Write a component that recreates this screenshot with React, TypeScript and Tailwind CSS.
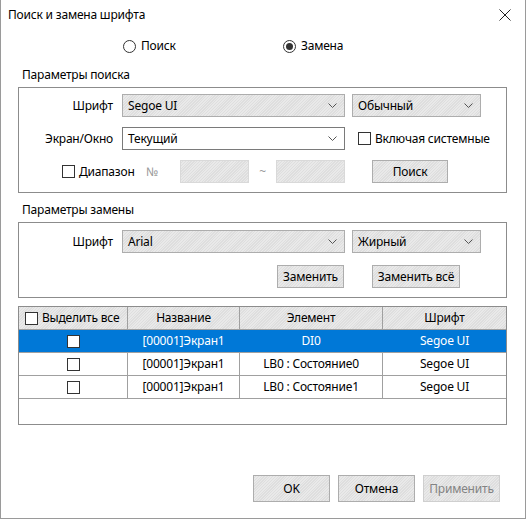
import React from 'react';

const hatch =
  'bg-[repeating-linear-gradient(135deg,#e9e9e9_0px,#e9e9e9_1px,#dedede_1px,#dedede_2px)]';

function Chevron() {
  return (
    <svg width="9" height="6" viewBox="0 0 9 6" className="shrink-0">
      <path d="M0.5 0.5 L4.5 4.5 L8.5 0.5" fill="none" stroke="#555" strokeWidth="1" />
    </svg>
  );
}

function Select({ value, width, white = false }: { value: string; width: string; white?: boolean }) {
  return (
    <div
      className={`${width} h-[23px] flex items-center justify-between pl-[5px] pr-[7px] border ${
        white ? 'bg-white border-[#7a7a7a]' : `${hatch} border-[#adadad]`
      }`}
    >
      <span>{value}</span>
      <Chevron />
    </div>
  );
}

function Button({ label, width, height = 'h-[23px]', disabled = false }: { label: string; width: string; height?: string; disabled?: boolean }) {
  return (
    <div
      className={`${width} ${height} flex items-center justify-center border ${hatch} ${
        disabled ? 'border-[#cfcfcf] text-[#838383]' : 'border-[#adadad]'
      }`}
    >
      {label}
    </div>
  );
}

function Checkbox() {
  return <div className="w-[13px] h-[13px] border border-[#333] shrink-0 bg-white" />;
}

function Radio({ checked }: { checked: boolean }) {
  return (
    <div className="w-[13px] h-[13px] rounded-full border border-[#333] flex items-center justify-center bg-white">
      {checked && <div className="w-[7px] h-[7px] rounded-full bg-[#333]" />}
    </div>
  );
}

const rows = [
  { name: '[00001]Экран1', el: 'DI0', font: 'Segoe UI', selected: true },
  { name: '[00001]Экран1', el: 'LB0 : Состояние0', font: 'Segoe UI', selected: false },
  { name: '[00001]Экран1', el: 'LB0 : Состояние1', font: 'Segoe UI', selected: false },
];

export default function App() {
  return (
    <div
      className="w-[526px] h-[519px] bg-white border-x border-b border-[#9a9a9a] text-[12px] tracking-[-0.2px] text-black flex flex-col"
      style={{ fontFamily: '"Noto Sans", "Open Sans", sans-serif' }}
    >
      {/* Title bar */}
      <div className="h-[30px] flex items-center justify-between pl-[7px] pr-[14px]">
        <span>Поиск и замена шрифта</span>
        <svg width="12" height="12" viewBox="0 0 12 12">
          <path d="M0.5 0.5 L11.5 11.5 M11.5 0.5 L0.5 11.5" stroke="#222" strokeWidth="1" />
        </svg>
      </div>

      {/* Mode radios */}
      <div className="h-[32px] flex items-center">
        <div className="ml-[122px] w-[160px] flex items-center gap-[5px]">
          <Radio checked={false} />
          <span>Поиск</span>
        </div>
        <div className="flex items-center gap-[5px]">
          <Radio checked />
          <span>Замена</span>
        </div>
      </div>

      {/* Search params */}
      <div className="ml-[21px] h-[25px] flex items-center">Параметры поиска</div>
      <div className="ml-[17px] w-[489px] h-[106px] border border-[#8c8c8c] flex flex-col gap-[10px] pt-[6px]">
        <div className="flex items-center">
          <span className="w-[94px] text-right">Шрифт</span>
          <div className="ml-[9px]"><Select value="Segoe UI" width="w-[223px]" /></div>
          <div className="ml-[7px]"><Select value="Обычный" width="w-[129px]" /></div>
        </div>
        <div className="flex items-center">
          <span className="w-[94px] text-right">Экран/Окно</span>
          <div className="ml-[9px]"><Select value="Текущий" width="w-[223px]" white /></div>
          <div className="ml-[13px] flex items-center gap-[4px]">
            <Checkbox />
            <span>Включая системные</span>
          </div>
        </div>
        <div className="flex items-center">
          <div className="ml-[43px] w-[84px] flex items-center gap-[4px]">
            <Checkbox />
            <span>Диапазон</span>
          </div>
          <span className="w-[34px] text-[#9a9a9a]">№</span>
          <div className={`w-[69px] h-[23px] border border-[#d9d9d9] ${hatch}`} />
          <span className="w-[27px] text-center text-[#9a9a9a]">~</span>
          <div className={`w-[69px] h-[23px] border border-[#d9d9d9] ${hatch}`} />
          <div className="ml-[27px]"><Button label="Поиск" width="w-[76px]" /></div>
        </div>
      </div>

      {/* Replace params */}
      <div className="ml-[21px] mt-[5px] h-[24px] flex items-center">Параметры замены</div>
      <div className="ml-[17px] w-[489px] h-[76px] border border-[#8c8c8c] flex flex-col gap-[12px] pt-[7px]">
        <div className="flex items-center">
          <span className="w-[94px] text-right">Шрифт</span>
          <div className="ml-[9px]"><Select value="Arial" width="w-[223px]" /></div>
          <div className="ml-[7px]"><Select value="Жирный" width="w-[129px]" /></div>
        </div>
        <div className="flex items-center">
          <div className="ml-[258px]"><Button label="Заменить" width="w-[67px]" /></div>
          <div className="ml-[28px]"><Button label="Заменить всё" width="w-[88px]" /></div>
        </div>
      </div>

      {/* Table */}
      <div className="ml-[17px] mt-[8px] w-[489px] h-[119px] border border-[#8c8c8c]">
        <div className={`grid grid-cols-[109px_112px_143px_123px] h-[23px] border-b border-[#a0a0a0] ${hatch}`}>
          <div className="flex items-center gap-[4px] pl-[6px] border-r border-[#a0a0a0]">
            <Checkbox />
            <span>Выделить все</span>
          </div>
          <div className="flex items-center justify-center border-r border-[#a0a0a0]">Название</div>
          <div className="flex items-center justify-center border-r border-[#a0a0a0]">Элемент</div>
          <div className="flex items-center justify-center">Шрифт</div>
        </div>
        {rows.map((r, i) => (
          <div
            key={i}
            className={`grid grid-cols-[109px_112px_143px_123px] h-[23px] border-b border-[#a0a0a0] ${
              r.selected ? 'bg-[#0078d7] text-white' : 'bg-white'
            }`}
          >
            <div className={`flex items-center justify-center border-r ${r.selected ? 'border-[#0078d7]' : 'border-[#a0a0a0]'}`}>
              <Checkbox />
            </div>
            <div className={`flex items-center justify-center border-r ${r.selected ? 'border-[#0078d7]' : 'border-[#a0a0a0]'}`}>{r.name}</div>
            <div className={`flex items-center justify-center border-r ${r.selected ? 'border-[#0078d7]' : 'border-[#a0a0a0]'}`}>{r.el}</div>
            <div className="flex items-center justify-center">{r.font}</div>
          </div>
        ))}
      </div>

      {/* Footer buttons */}
      <div className="mt-auto mb-[16px] flex justify-end gap-[8px] pr-[25px]">
        <Button label="OK" width="w-[77px]" height="h-[27px]" />
        <Button label="Отмена" width="w-[77px]" height="h-[27px]" />
        <Button label="Применить" width="w-[77px]" height="h-[27px]" disabled />
      </div>
    </div>
  );
}
